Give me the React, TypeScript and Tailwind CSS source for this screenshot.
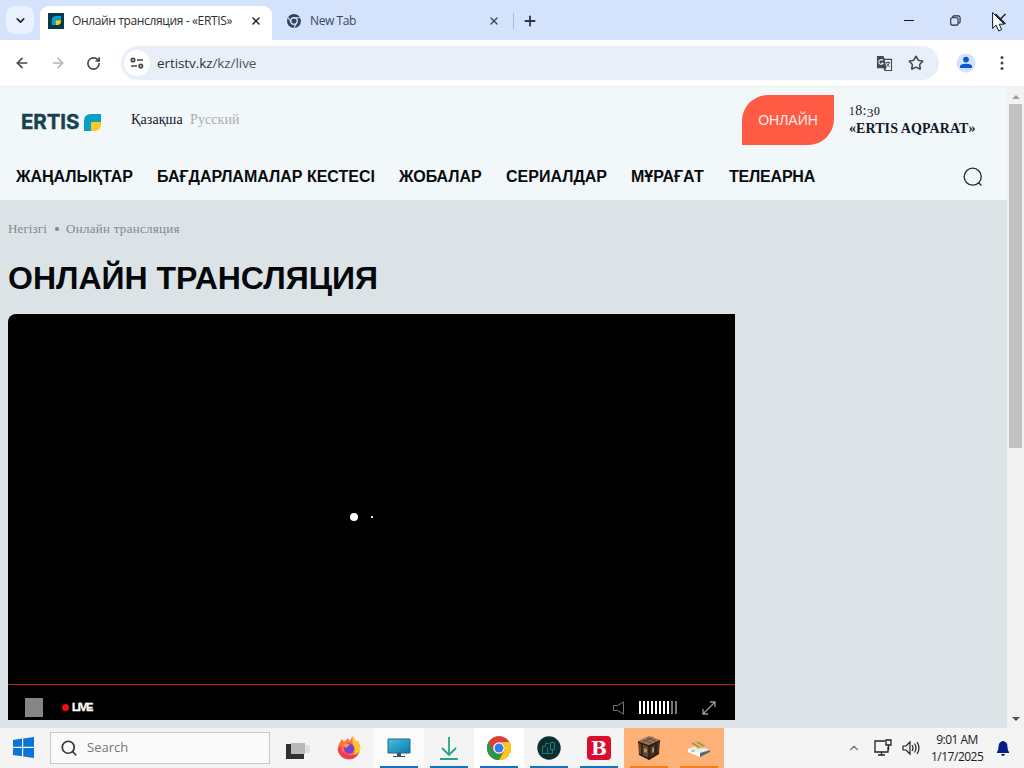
import type { ReactNode } from "react";
import { ArrowLeft, ArrowRight, ChevronDown, ChevronUp, Plus, RotateCw, Search, Star, X } from "lucide-react";

const NAV_ITEMS = [
  { label: "ЖАҢАЛЫҚТАР", width: "w-[141px]" },
  { label: "БАҒДАРЛАМАЛАР КЕСТЕСІ", width: "w-[242px]" },
  { label: "ЖОБАЛАР", width: "w-[107px]" },
  { label: "СЕРИАЛДАР", width: "w-[125px]" },
  { label: "МҰРАҒАТ", width: "w-[98px]" },
  { label: "ТЕЛЕАРНА", width: "w-[100px] tracking-[-0.2px]" },
];

function ErtisMark({ className }: { className?: string }) {
  return (
    <svg viewBox="0 0 17 17" className={className}>
      <path d="M0 17V7Q0 0 7 0H17V8H9Q7 8 7 10V17Z" fill="#0a9fc4" />
      <path d="M7 17V10Q7 8 9 8H17V10Q17 17 10 17Z" fill="#fbc926" />
    </svg>
  );
}

function ChromeGrey() {
  return (
    <svg viewBox="0 0 16 16" className="h-[14px] w-[14px]">
      <circle cx="8" cy="8" r="8" fill="#34445f" />
      <circle cx="8" cy="8" r="3.7" fill="#34445f" stroke="#d5e2fc" strokeWidth="1.5" />
      <path d="M8 4.3h7M4.8 9.8 1.3 4M11.2 9.8 7.9 15.6" stroke="#d5e2fc" strokeWidth="1.2" />
    </svg>
  );
}

function TabStrip() {
  return (
    <div className="flex h-10 shrink-0 bg-[#d5e2fc]">
      <div className="ml-[6px] mt-[6px] flex h-7 w-7 items-center justify-center rounded-[9px] bg-[#e9f0fe]">
        <ChevronDown className="h-[13px] w-[13px] text-[#1f2430]" strokeWidth={3} />
      </div>
      <div className="ml-[6px] mt-[6px] flex h-[34px] w-[232px] items-center rounded-t-[9px] bg-white pb-[5px]">
        <div className="ml-2 flex h-4 w-4 items-center justify-center bg-[#053b4b]">
          <ErtisMark className="h-[9px] w-[9px]" />
        </div>
        <span className="ml-2 w-[178px] whitespace-nowrap text-[12px] tracking-[-0.36px] text-[#2c2f33]">
          Онлайн трансляция - «ERTIS»
        </span>
        <X className="h-[12px] w-[12px] text-[#202124]" strokeWidth={3} />
      </div>
      <div className="mt-[6px] flex h-[29px] items-center">
        <div className="ml-[15px]"><ChromeGrey /></div>
        <span className="ml-[9px] w-[178px] text-[12px] tracking-[-0.4px] text-[#38465c]">New Tab</span>
        <X className="h-[12px] w-[12px] text-[#38465c]" strokeWidth={2.7} />
        <div className="ml-[13px] h-4 w-px bg-[#a4bee4]" />
        <Plus className="ml-[8px] h-4 w-4 text-[#29364c]" strokeWidth={2.7} />
      </div>
      <div className="ml-auto flex h-10 items-center">
        <div className="mr-[36px] h-px w-[10px] bg-[#111827]" />
        <svg viewBox="0 0 12 12" className="mr-[31px] h-[11px] w-[11px]" fill="none" stroke="#1c2533" strokeWidth="1.2">
          <rect x=".8" y="3" width="8" height="8" rx="1.5" />
          <path d="M3 2.8V2Q3 1 4.2 1H9Q11 1 11 3V8Q11 9 9 9" />
        </svg>
        <svg viewBox="0 0 20 24" className="mr-[12px] mt-[6px] h-6 w-5">
          <path d="M3.5 3 13.5 13M13.5 3 3.5 13" stroke="#131b28" strokeWidth="1.4" />
          <path d="M.6 1.5V17.5L4.1 14.2 6.7 20 9.7 18.6 7.2 13.2H12.1Z" fill="#fff" stroke="#101828" strokeWidth="1" />
        </svg>
      </div>
    </div>
  );
}

function Toolbar() {
  return (
    <div className="flex h-[47px] shrink-0 items-center border-b border-[#eeeff0] bg-white">
      <ArrowLeft className="ml-[14px] h-4 w-4 text-[#454746]" strokeWidth={2.4} />
      <ArrowRight className="ml-[20px] h-4 w-4 text-[#b0b2b5]" strokeWidth={2.2} />
      <RotateCw className="ml-[20px] h-[15px] w-[15px] text-[#454746]" strokeWidth={2.6} />
      <div className="ml-[20px] flex h-[34px] w-[818px] items-center rounded-full bg-[#e9eff9]">
        <div className="ml-[3px] flex h-[26px] w-[26px] items-center justify-center rounded-full bg-white">
          <svg viewBox="0 0 14 12" className="h-3 w-[14px]" fill="none" stroke="#454746" strokeWidth="1.7">
            <circle cx="3" cy="3" r="1.7" />
            <path d="M7 3H13M1 9H7" />
            <circle cx="10.8" cy="9" r="1.7" />
          </svg>
        </div>
        <span className="ml-[7px] text-[13.5px] tracking-[-0.08px] text-[#303236]">ertistv.kz<span className="text-[#50545b]">/kz/live</span></span>
        <svg viewBox="0 0 18 18" className="ml-auto h-[17px] w-[17px]">
          <path d="M1 1H8L9 4H17V17H9L8 14H1Z" fill="#45484d" />
          <path d="M9.4 5.2H15.8V15.8H10L11 13.5Z" fill="#f0f3f9" />
          <path d="M7.4 5.8A2.5 2.5 0 1 0 7.6 8.7H5.4" fill="none" stroke="#e9eff9" strokeWidth="1.1" />
          <path d="M10.5 8H15M12.7 6.7V8M14.2 8Q13.7 10.8 11 12.5M11.2 9Q12.3 11.4 14.5 12.6" fill="none" stroke="#45484d" strokeWidth="1" />
        </svg>
        <Star className="ml-[15px] mr-[15px] h-4 w-4 text-[#454746]" strokeWidth={2.4} />
      </div>
      <svg viewBox="0 0 20 20" className="ml-[17px] h-5 w-5">
        <circle cx="10" cy="10" r="9.5" fill="#d3e3fd" />
        <circle cx="10" cy="6.6" r="2.9" fill="#0b57d0" />
        <path d="M4 15V13.5Q4 10.8 10 10.8T16 13.5V15Z" fill="#0b57d0" />
      </svg>
      <svg viewBox="0 0 4 16" className="ml-[24px] h-4 w-1" fill="#454746">
        <circle cx="2" cy="2.6" r="1.5" /><circle cx="2" cy="8" r="1.5" /><circle cx="2" cy="13.4" r="1.5" />
      </svg>
    </div>
  );
}

function SiteHeader() {
  return (
    <header className="h-[113px] bg-[#f2f7fa]">
      <div className="flex h-[66px] items-start pt-2">
        <div className="ml-[21px] flex h-[54px] w-[110px] items-center">
          <span className="w-[63px] font-['Inter'] text-[20.5px] font-bold tracking-[-0.1px] text-[#17414e] [-webkit-text-stroke:0.4px_#17414e]">ERTIS</span>
          <ErtisMark className="h-[17px] w-[17px]" />
        </div>
        <div className="mt-[15px] flex h-5 font-['Liberation_Serif'] text-[14px] leading-[20px]">
          <span className="w-[59px] tracking-[0.1px] text-[#11161c]">Қазақша</span>
          <span className="tracking-[0.1px] text-[#a9aeb2]">Русский</span>
        </div>
        <div className="ml-auto flex h-[50px] w-[92px] items-center justify-center rounded-br-[26px] rounded-tl-[26px] bg-[#ff5a43] font-['Liberation_Sans'] text-[14px] text-[#ffe9e5]">
          ОНЛАЙН
        </div>
        <div className="ml-[15px] mt-[7px] w-[158px] whitespace-nowrap font-['Liberation_Serif'] text-[14px] leading-[17px] text-[#14182c]">
          <div className="h-[18px] tracking-[0.4px]">
            <span className="text-[11.5px]">1</span>8:<span className="relative top-[2px] text-[13.5px]">3</span><span className="text-[11.5px] [-webkit-text-stroke:0.2px_#14182c]">0</span>
          </div>
          <div className="font-bold tracking-[0.08px]">«ERTIS AQPARAT»</div>
        </div>
      </div>
      <nav className="flex h-[47px] items-center pl-4 font-['Liberation_Sans'] text-[16px] font-bold text-[#080b0e]">
        {NAV_ITEMS.map((item) => (
          <span key={item.label} className={`whitespace-nowrap ${item.width}`}>{item.label}</span>
        ))}
        <svg viewBox="0 0 20 20" className="ml-auto mr-[24px] h-5 w-5" fill="none" stroke="#20272e" strokeWidth="1.3">
          <circle cx="9.7" cy="9.7" r="8.5" />
          <path d="M15.5 15.5 18.4 18.6" />
        </svg>
      </nav>
    </header>
  );
}

function Player() {
  return (
    <div className="flex h-[406px] w-[727px] flex-col rounded-tl-[8px] bg-black">
      <div className="flex h-[370px] items-center pl-[342px] pt-[35px]">
        <div className="h-2 w-2 rounded-full bg-white" />
        <div className="ml-[13px] h-[2px] w-[2px] bg-[#e5e5e5]" />
      </div>
      <div className="h-px bg-[#c01b2e]" />
      <div className="flex h-[35px] items-center pt-[10px]">
        <div className="ml-[17px] h-[19px] w-[18px] bg-[#858585]" />
        <div className="ml-[19px] h-[7px] w-[7px] rounded-full bg-[#f00d0d]" />
        <span className="ml-[3px] font-['Liberation_Sans'] text-[11px] font-bold tracking-[-1px] text-white [-webkit-text-stroke:0.4px_white]">LIVE</span>
        <svg viewBox="0 0 14 14" className="ml-auto h-[14px] w-[14px]" fill="none" stroke="#777" strokeWidth="1">
          <path d="M.5 4.5H4.5L10.5 1V13L4.5 9.5H.5Z" />
        </svg>
        <div className="ml-[12px] flex gap-[2px]">
          {Array.from({ length: 10 }, (_, i) => (
            <div key={i} className={`h-[13px] w-[2px] ${i < 8 ? "bg-white" : "bg-[#777777]"}`} />
          ))}
        </div>
        <svg viewBox="0 0 16 16" className="ml-[24px] mr-[18px] h-4 w-4" fill="none" stroke="#9a9a9a" strokeWidth="1.3">
          <path d="M2 14 14 2M9 2H14V7M7 14H2V9" />
        </svg>
      </div>
    </div>
  );
}

function Page() {
  return (
    <div className="flex h-[641px] shrink-0">
      <main className="w-[1007px] bg-[#dce3e7]">
        <SiteHeader />
        <div className="pl-2">
          <div className="flex h-[58px] items-center font-['Liberation_Serif'] text-[13px] text-[#81888f]">
            <span className="w-[47px] tracking-[0.12px]">Негізгі</span>
            <span className="h-1 w-1 rounded-full bg-[#7e858b]" />
            <span className="ml-[7px] tracking-[0.28px]">Онлайн трансляция</span>
          </div>
          <h1 className="h-[56px] font-['Liberation_Sans'] text-[32px] font-bold leading-[40px] text-[#05080b]">ОНЛАЙН ТРАНСЛЯЦИЯ</h1>
          <Player />
        </div>
      </main>
      <div className="flex w-[17px] flex-col items-center bg-[#f2f2f3]">
        <svg viewBox="0 0 8 4" className="mt-[8px] h-1 w-2"><path d="M0 4 4 0 8 4Z" fill="#a0a0a0" /></svg>
        <div className="mt-[5px] h-[344px] w-[13px] bg-[#c1c1c1]" />
        <svg viewBox="0 0 8 4" className="mb-[7px] mt-auto h-1 w-2"><path d="M0 0H8L4 4Z" fill="#4c4c4c" /></svg>
      </div>
    </div>
  );
}

function TaskItem({ children, className = "", bar = "bg-[#1672bf]" }: { children: ReactNode; className?: string; bar?: string }) {
  return (
    <div className={`flex h-10 w-[50px] flex-col items-center ${className}`}>
      <div className="flex h-[38px] items-center pt-[2px]">{children}</div>
      <div className={`h-[2px] w-[38px] ${bar}`} />
    </div>
  );
}

function Taskbar() {
  return (
    <footer className="flex h-10 shrink-0 bg-[#f4f4f4]">
      <svg viewBox="0 0 21 21" className="ml-[13px] mt-[9px] h-[21px] w-[21px]" fill="#0874d8">
        <path d="M0 3 9 1.6V9.8H0ZM10.2 1.4 21 0V9.8H10.2ZM0 11H9V19.2L0 17.9ZM10.2 11H21V21L10.2 19.5Z" />
      </svg>
      <div className="ml-[16px] mt-[4px] flex h-8 w-[220px] items-center border border-[#c9c9c9] bg-[#fafafa]">
        <Search className="ml-[9px] h-[18px] w-[18px] text-[#333]" strokeWidth={2.3} />
        <span className="ml-[9px] text-[13px] text-[#777]">Search</span>
      </div>
      <div className="ml-[4px] flex">
        <TaskItem bar="bg-transparent">
          <svg viewBox="0 0 26 20" className="mt-1 h-5 w-[26px]">
            <path d="M0 4H18V19H0Z" fill="#303030" />
            <path d="M5 3H19V14H5Z" fill="#b9b9b9" /><path d="M19 5H24V13H19Z" fill="#dedede" />
          </svg>
        </TaskItem>
        <TaskItem bar="bg-transparent">
          <svg viewBox="0 0 24 24" className="h-6 w-6">
            <path d="M3 6 5 3 7 6 11 2 12 5Q15 3 15 0Q18 3 19 6L21 5Q26 14 20 20Q14 26 6 22Q-3 16 3 6Z" fill="#ff7139" />
            <path d="M15 0Q18 3 19 6L21 5Q26 14 20 20L15 21Q20 15 16 9Z" fill="#ffc72e" />
            <path d="M1 13Q3 23 13 23Q20 22 22 16Q18 20 12 19Q4 18 4 10Z" fill="#ef365f" />
            <circle cx="12" cy="12.5" r="5.2" fill="#7543d4" />
            <path d="M5 9Q10 6 13 9Q10 10 10 12Q8 12 5 9Z" fill="#ff9633" />
          </svg>
        </TaskItem>
        <TaskItem className="bg-[#fbfbfb]">
          <svg viewBox="0 0 24 22" className="h-[22px] w-6">
            <defs><linearGradient id="screen" x2="1" y2="1"><stop stopColor="#48c0e4" /><stop offset="1" stopColor="#087ca9" /></linearGradient></defs>
            <path d="M1 2H23V16H1Z" fill="url(#screen)" stroke="#276983" />
            <path d="M10 16H14V19H18V20H6V19H10Z" fill="#41515b" />
          </svg>
        </TaskItem>
        <TaskItem>
          <svg viewBox="0 0 20 24" className="h-6 w-5" fill="none" stroke="#22a885" strokeWidth="1.8">
            <path d="M10 1V19M3 12 10 19 17 12M1 23H19" />
          </svg>
        </TaskItem>
        <TaskItem className="bg-white">
          <svg viewBox="0 0 24 24" className="h-6 w-6">
            <circle cx="12" cy="12" r="12" fill="#dc4136" />
            <path d="M1.6 6A12 12 0 0 0 12 24L17.2 15A6 6 0 0 1 6.8 15Z" fill="#26994b" />
            <path d="M12 6H22.4A12 12 0 0 1 12 24L17.2 15A6 6 0 0 0 12 6Z" fill="#fdc719" />
            <circle cx="12" cy="12" r="5.8" fill="#fff" /><circle cx="12" cy="12" r="4.5" fill="#367ee9" />
          </svg>
        </TaskItem>
        <TaskItem>
          <svg viewBox="0 0 24 24" className="h-6 w-6" fill="none" stroke="#2b7770">
            <circle cx="12" cy="12" r="11.7" fill="#092f32" stroke="none" />
            <path d="M5.5 17.5V10.5H8.5V7.5H11.5M5.5 17.5H10.5V11.5M13.5 6.5H17.5V13.5H13.5ZM10.5 17.5H15.5V13.5" />
          </svg>
        </TaskItem>
        <TaskItem>
          <div className="flex h-6 w-6 items-center justify-center rounded-[4px] bg-[#dc0c2c] font-['DejaVu_Serif'] text-[19px] font-bold leading-none text-white">B</div>
        </TaskItem>
        <TaskItem className="bg-[#feb177]" bar="bg-[#f57b1f]">
          <svg viewBox="0 0 24 24" className="h-6 w-6">
            <path d="M1 5 12 0 23 4 12 9Z" fill="#9c765a" /><path d="M1 5 12 9V24L2 19Z" fill="#62452f" /><path d="M12 9 23 4 22 18 12 24Z" fill="#47311f" />
            <path d="M1 6 12 10 23 5M5 7V20M12 9V23M19 6V19M2 18 12 23 22 17" stroke="#241a12" strokeWidth="1.3" fill="none" />
            <path d="M6 4 15 7M10 2 19 5M6 6 16 1" stroke="#66503f" fill="none" />
            <path d="M7 12 10 13V17L7 16ZM15 12 17 11V16L15 17Z" fill="#a98b66" />
          </svg>
        </TaskItem>
        <TaskItem className="bg-[#feb177]" bar="bg-[#f57b1f]">
          <svg viewBox="0 0 24 20" className="h-5 w-6">
            <path d="M1 11 11 7 23 12 13 17Z" fill="#e7eceb" /><path d="M1 11 13 15V19L1 14Z" fill="#fff" /><path d="M13 15 23 12V14L13 19Z" fill="#536b70" />
            <path d="M4 5 14 3 20 9 11 11Z" fill="#e1b65a" /><path d="M5 5 12 9M10 4 17 8" stroke="#8c7443" />
            <path d="M4 13H8" stroke="#28b37f" />
          </svg>
        </TaskItem>
      </div>
      <div className="ml-auto flex h-10 items-center">
        <ChevronUp className="mr-[13px] h-[14px] w-[14px] text-[#777]" strokeWidth={2} />
        <svg viewBox="0 0 18 18" className="mr-[10px] h-[18px] w-[18px]" fill="none" stroke="#222" strokeWidth="1.3">
          <path d="M11 2H1V13H14V8M7.5 13V16M4 16H11M12 1H17V6H12ZM14.5 6V11" />
        </svg>
        <svg viewBox="0 0 18 16" className="mr-[11px] h-4 w-[18px]" fill="none" stroke="#222" strokeWidth="1.2">
          <path d="M1 6H4L8 2V14L4 10H1ZM10 5Q12 8 10 11M12.5 3.5Q15.5 8 12.5 12.5M15 2Q19 8 15 14" />
        </svg>
        <div className="mr-[13px] w-[52px] whitespace-nowrap text-center text-[12px] leading-[17px] tracking-[-0.5px] text-[#202020]">
          <div>9:01 AM</div>
          <div>1/17/2025</div>
        </div>
        <svg viewBox="0 0 14 16" className="mr-[14px] h-4 w-[14px]" fill="#071f85">
          <path d="M1 12Q2.5 10 2.5 7 2.5 2 6 1.5V1H8V1.5Q11.5 2 11.5 7 11.5 10 13 12V13H1ZM5 14H9Q8.5 16 7 16T5 14Z" />
        </svg>
      </div>
    </footer>
  );
}

export default function App() {
  return (
    <div className="flex h-[768px] w-[1024px] flex-col overflow-hidden bg-white font-['Open_Sans','Noto_Sans',sans-serif]">
      <TabStrip />
      <Toolbar />
      <Page />
      <Taskbar />
    </div>
  );
}
